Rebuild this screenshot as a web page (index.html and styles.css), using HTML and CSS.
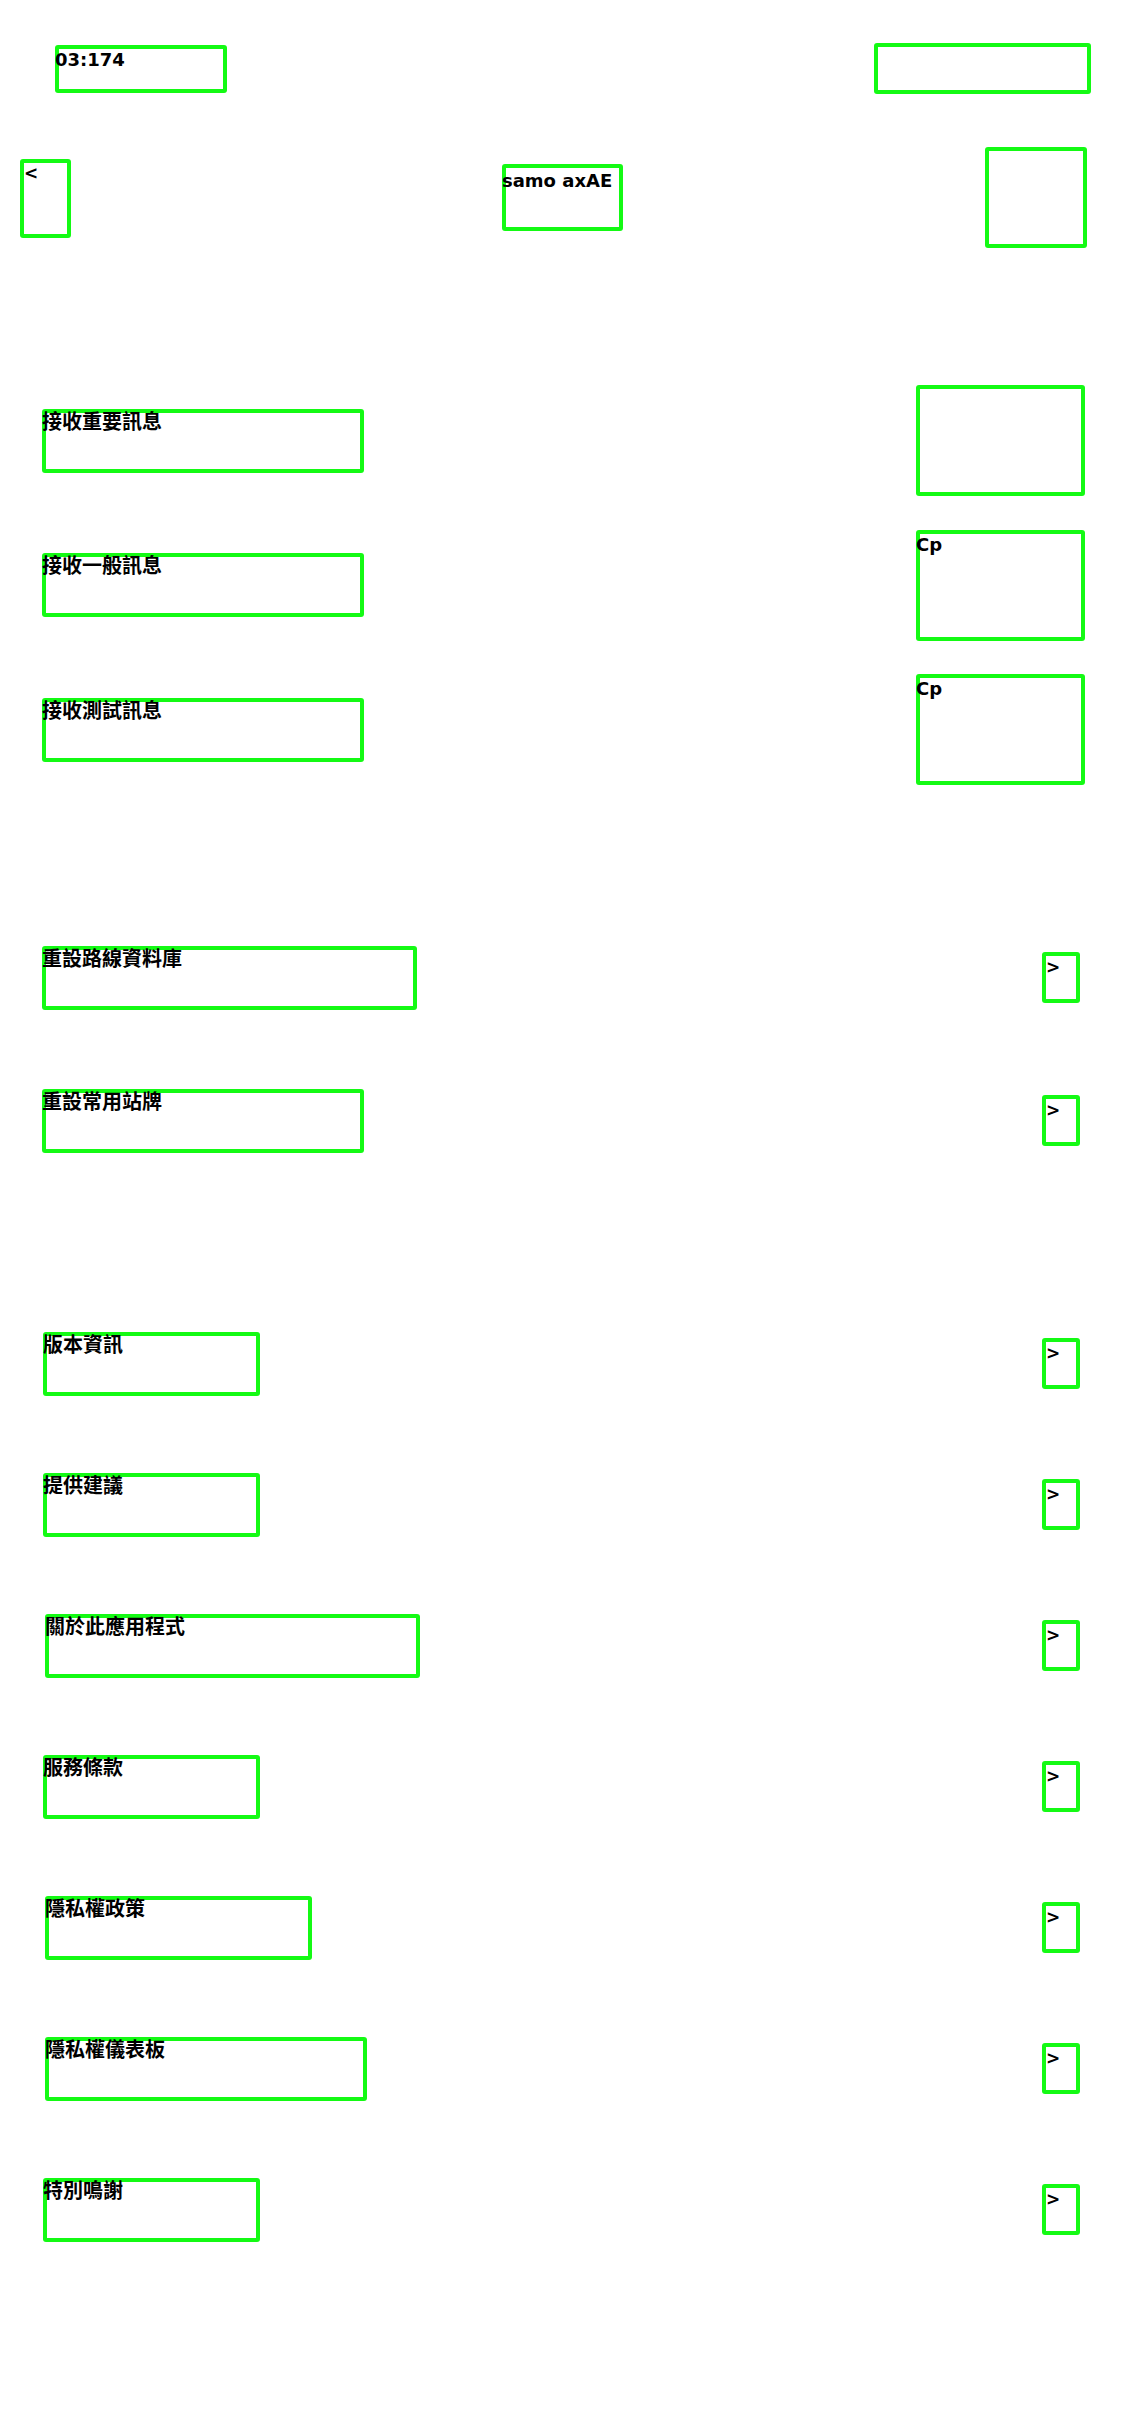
FILE: index.html
```html
<!DOCTYPE html>
<html lang="zh-Hant">
<head>
<meta charset="utf-8">
<title>samo axAE</title>
<link rel="stylesheet" href="styles.css">
</head>
<body>
<div class="screen">
  <header class="status">
    <div class="box time">03:174</div>
    <div class="box status-icons"></div>
  </header>

  <nav class="nav">
    <div class="box back">&lt;</div>
    <div class="box title">samo axAE</div>
    <div class="box nav-action"></div>
  </nav>

  <section class="group toggles">
    <div class="row toggle-row">
      <div class="box label w6">接收重要訊息</div>
      <div class="box switch"></div>
    </div>
    <div class="row toggle-row">
      <div class="box label w6">接收一般訊息</div>
      <div class="box switch">Cp</div>
    </div>
    <div class="row toggle-row">
      <div class="box label w6">接收測試訊息</div>
      <div class="box switch">Cp</div>
    </div>
  </section>

  <section class="group resets">
    <div class="row link-row">
      <div class="box label w7">重設路線資料庫</div>
      <div class="box chevron">&gt;</div>
    </div>
    <div class="row link-row">
      <div class="box label w6">重設常用站牌</div>
      <div class="box chevron">&gt;</div>
    </div>
  </section>

  <section class="group about">
    <div class="row link-row">
      <div class="box label w4">版本資訊</div>
      <div class="box chevron">&gt;</div>
    </div>
    <div class="row link-row">
      <div class="box label w4">提供建議</div>
      <div class="box chevron">&gt;</div>
    </div>
    <div class="row link-row">
      <div class="box label w7 shift">關於此應用程式</div>
      <div class="box chevron">&gt;</div>
    </div>
    <div class="row link-row">
      <div class="box label w4">服務條款</div>
      <div class="box chevron">&gt;</div>
    </div>
    <div class="row link-row">
      <div class="box label w5 shift">隱私權政策</div>
      <div class="box chevron">&gt;</div>
    </div>
    <div class="row link-row">
      <div class="box label w6 shift">隱私權儀表板</div>
      <div class="box chevron">&gt;</div>
    </div>
    <div class="row link-row">
      <div class="box label w4">特別鳴謝</div>
      <div class="box chevron">&gt;</div>
    </div>
  </section>
</div>
</body>
</html>
```

FILE: styles.css
```css
* {
  box-sizing: border-box;
}

html, body {
  margin: 0;
  padding: 0;
  background: #ffffff;
}

body {
  width: 1125px;
  min-height: 2436px;
  font-family: "DejaVu Sans", "Noto Sans CJK TC", sans-serif;
  color: #000000;
}

.screen {
  display: flex;
  flex-direction: column;
}

.box {
  box-shadow: inset 0 0 0 4px #14fa14;
  border-radius: 3px;
  font-weight: bold;
}

/* status bar */
.status {
  display: flex;
  justify-content: space-between;
  align-items: flex-start;
  padding: 43px 34px 0 55px;
}

.time {
  width: 172px;
  height: 48px;
  margin-top: 2px;
  padding-top: 4px;
  font-family: "DejaVu Sans", sans-serif;
  font-size: 18px;
  line-height: 21px;
}

.status-icons {
  width: 217px;
  height: 51px;
}

/* navigation bar */
.nav {
  display: grid;
  grid-template-columns: 1fr auto 1fr;
  align-items: start;
  margin-top: 53px;
}

.back {
  justify-self: start;
  width: 51px;
  height: 79px;
  margin: 12px 0 0 20px;
  padding: 5px 0 0 4px;
  font-family: "DejaVu Sans", sans-serif;
  font-size: 17px;
  line-height: 19px;
}

.title {
  width: 121px;
  height: 67px;
  margin-top: 17px;
  padding-top: 6px;
  font-family: "DejaVu Sans", sans-serif;
  font-size: 18px;
  line-height: 21px;
  white-space: nowrap;
}

.nav-action {
  justify-self: end;
  width: 102px;
  height: 101px;
  margin-right: 38px;
}

/* groups and rows */
.group {
  display: flex;
  flex-direction: column;
}

.row {
  display: flex;
  justify-content: space-between;
  align-items: center;
}

.toggles {
  margin-top: 137px;
  gap: 33.5px;
}

.toggle-row {
  height: 111px;
  padding: 0 40px 0 42px;
}

.resets {
  margin-top: 161px;
  gap: 79px;
}

.about {
  margin-top: 179px;
  gap: 77px;
}

.link-row {
  height: 64px;
  padding: 0 45px 0 42px;
}

.about .link-row {
  padding-left: 43px;
}

.label {
  height: 64px;
  font-family: "Noto Sans CJK TC", "Noto Sans CJK SC", sans-serif;
  font-size: 20px;
  line-height: 24px;
  white-space: nowrap;
}

.label.shift {
  margin-left: 2px;
}

.w4 { width: 217px; }
.w5 { width: 267px; }
.w6 { width: 322px; }
.w7 { width: 375px; }

.switch {
  width: 169px;
  height: 111px;
  padding-top: 4px;
  font-family: "DejaVu Sans", sans-serif;
  font-size: 18px;
  line-height: 21px;
}

.chevron {
  width: 38px;
  height: 51px;
  margin-top: -2px;
  padding: 6px 0 0 4px;
  font-family: "DejaVu Sans", sans-serif;
  font-size: 17px;
  line-height: 19px;
}
```
